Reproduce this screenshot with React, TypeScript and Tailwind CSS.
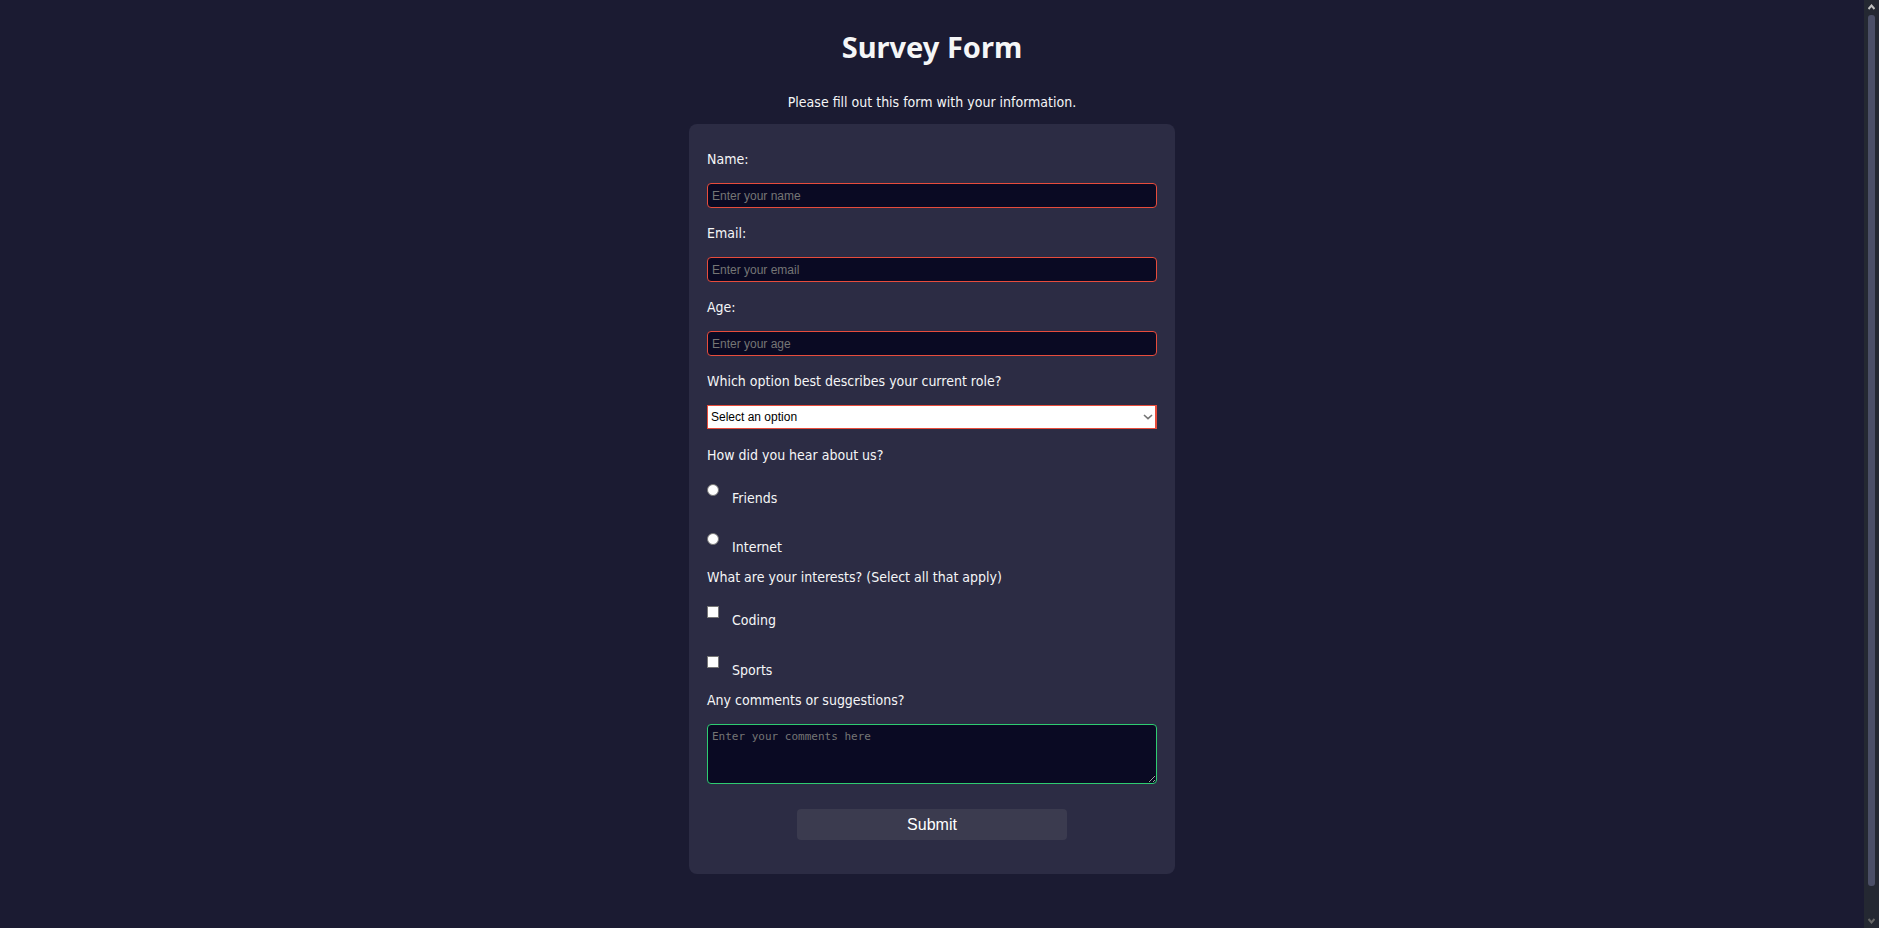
import type { ReactNode } from 'react';

const labelClass = 'block text-[14px] leading-5';
const fieldClass =
  "block w-full rounded border bg-[#0a0a23] px-1 font-['Liberation_Sans',Arial,sans-serif] text-[12px] text-[#f5f6f7] placeholder:text-[#757575] focus:outline-none";

function TextField({ id, label, type, placeholder }: { id: string; label: string; type: string; placeholder: string }) {
  return (
    <div className="flex flex-col gap-[14px]">
      <label htmlFor={id} className={labelClass}>{label}</label>
      <input id={id} type={type} placeholder={placeholder} required className={`${fieldClass} h-[25px] border-[#e74c3c]`} />
    </div>
  );
}

function Choice({ id, type, name, children }: { id: string; type: 'radio' | 'checkbox'; name: string; children: ReactNode }) {
  const shape = type === 'radio' ? 'rounded-full' : 'rounded-none';
  return (
    <div className="flex items-start gap-[13px]">
      <input
        id={id}
        type={type}
        name={name}
        className={`size-3 appearance-none border border-[#767676] bg-white checked:bg-[#0075ff] ${shape}`}
      />
      <label htmlFor={id} className={`${labelClass} pt-1`}>{children}</label>
    </div>
  );
}

function ScrollBar() {
  return (
    <div aria-hidden="true" className="flex w-[15px] shrink-0 flex-col items-center justify-between bg-[#242832] pt-1 pb-1">
      <svg width="7" height="6" viewBox="0 0 7 6" fill="none" stroke="#c0c0c0" strokeWidth="2"><path d="M0.5 5 3.5 1.5 6.5 5" /></svg>
      <div className="mt-[5px] mb-8 w-[7px] grow rounded-[3px] bg-[#4b4f67]" />
      <svg width="7" height="6" viewBox="0 0 7 6" fill="none" stroke="#686868" strokeWidth="2"><path d="M0.5 1 3.5 4.5 6.5 1" /></svg>
    </div>
  );
}

export default function App() {
  return (
    <div className="flex min-h-screen bg-[#1b1b32] font-['DejaVu_Sans_Condensed','DejaVu_Sans',sans-serif] text-[#f5f6f7]">
      <main className="flex grow flex-col items-center px-4 pt-7">
        <h1 className="font-['Noto_Sans',sans-serif] text-[29px] leading-[38px] font-bold">Survey Form</h1>
        <p className="mt-[26px] text-[14px] leading-5">Please fill out this form with your information.</p>
        <form className="mt-3 w-full max-w-[486px] rounded-lg bg-[#2c2c44] px-[18px] pt-[25px] pb-[34px]">
          <div className="flex flex-col gap-[15px]">
            <TextField id="name" label="Name:" type="text" placeholder="Enter your name" />
            <TextField id="email" label="Email:" type="email" placeholder="Enter your email" />
            <TextField id="age" label="Age:" type="number" placeholder="Enter your age" />
            <div className="flex flex-col gap-[14px]">
              <label htmlFor="role" className={labelClass}>Which option best describes your current role?</label>
              <div className="grid items-center">
                <select
                  id="role"
                  required
                  className="col-start-1 row-start-1 h-6 w-full appearance-none border border-r-2 border-[#e74c3c] bg-white px-[3px] font-['Liberation_Sans',Arial,sans-serif] text-[12px] text-black"
                >
                  <option>Select an option</option>
                  <option>Student</option>
                  <option>Professional</option>
                </select>
                <svg className="pointer-events-none col-start-1 row-start-1 mr-1 justify-self-end" width="10" height="6" viewBox="0 0 10 6" fill="none" stroke="#757575" strokeWidth="1.6"><path d="M1 1 5 4.6 9 1" /></svg>
              </div>
            </div>
          </div>

          <fieldset className="mt-4">
            <legend className={labelClass}>How did you hear about us?</legend>
            <div className="mt-[19px] flex flex-col gap-[25px]">
              <Choice id="friends" type="radio" name="source">Friends</Choice>
              <Choice id="internet" type="radio" name="source">Internet</Choice>
            </div>
          </fieldset>

          <fieldset className="mt-[10px]">
            <legend className={labelClass}>What are your interests? (Select all that apply)</legend>
            <div className="mt-[19px] flex flex-col gap-[26px]">
              <Choice id="coding" type="checkbox" name="interest">Coding</Choice>
              <Choice id="sports" type="checkbox" name="interest">Sports</Choice>
            </div>
          </fieldset>

          <label htmlFor="comments" className={`${labelClass} mt-[10px]`}>Any comments or suggestions?</label>
          <textarea
            id="comments"
            placeholder="Enter your comments here"
            className="mt-[14px] block h-[60px] w-full resize-y rounded border border-[#2ecc71] bg-[#0a0a23] px-1 py-1 font-['DejaVu_Sans_Mono',monospace] text-[11px] leading-4 placeholder:text-[#757575] focus:outline-none"
          />
          <button
            type="button"
            className="mx-auto mt-[25px] block h-[31px] w-3/5 rounded bg-[#3b3b4f] font-['Liberation_Sans',Arial,sans-serif] text-[16px] text-white"
          >
            Submit
          </button>
        </form>
      </main>
      <ScrollBar />
    </div>
  );
}
